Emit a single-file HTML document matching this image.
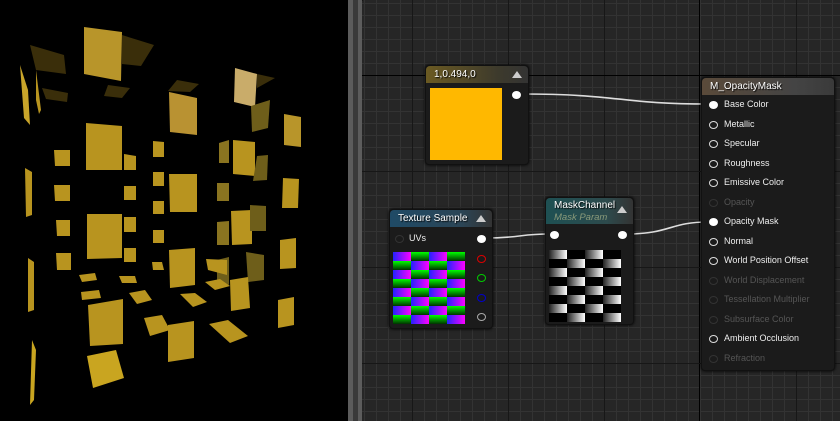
<!DOCTYPE html>
<html><head><style>
*{margin:0;padding:0;box-sizing:border-box}
body{width:840px;height:421px;overflow:hidden;background:#000;position:relative;font-family:"Liberation Sans",sans-serif;}
#graph{position:absolute;left:362px;top:0;width:478px;height:421px;background-color:#262626;
background-image:linear-gradient(#161616,#161616),linear-gradient(#161616,#161616),linear-gradient(to right,#333 1px,transparent 1px),linear-gradient(to bottom,#333 1px,transparent 1px);
}
.vl{position:absolute;top:0;width:1px;height:421px;background:#171717}
.hl{position:absolute;left:362px;width:478px;height:1px;background:#171717}
.node{position:absolute;background:#1b1b1b;border-radius:4px;box-shadow:0 0 3px #000;border:1px solid #111}
.hdr{height:17px;border-radius:4px 4px 0 0;color:#fff;font-size:10px;line-height:17px;padding-left:8px;text-shadow:1px 1px 1px #000}
.tri{position:absolute;right:6px;top:5px;width:0;height:0;border-left:5px solid transparent;border-right:5px solid transparent;border-bottom:7px solid #ccc}
.pin{position:absolute;width:9px;height:8px;border-radius:50%;}
.pf{background:#fff}
.po{border:1.5px solid #ddd}
.lbl{position:absolute;font-size:9px;color:#eee}
.dim{color:#555}
</style></head><body>
<svg width="348" height="421" style="position:absolute;left:0;top:0">
<rect width="348" height="421" fill="#000"/>
<g fill="#b8941f">
<polygon points="84,27 122,32 121,81 84,74" fill="#b8952a"/>
<polygon points="122,35 154,45 141,66 122,64" fill="#3a2e0a"/>
<polygon points="30,45 64,55 66,74 36,70" fill="#3a2e0a"/>
<polygon points="42,88 68,93 67,102 46,99" fill="#3a2e0a"/>
<polygon points="108,85 130,88 122,98 104,96" fill="#3a2e0a"/>
<polygon points="20,65 28,90 30,125 24,118" fill="#c9a52a"/>
<polygon points="36,70 41,110 39,114 36,100"/>
<polygon points="235,68 257,74 255,107 234,102" fill="#c9ac6a"/>
<polygon points="257,74 275,78 257,88" fill="#3a2e0a"/>
<polygon points="169,92 197,98 197,135 170,132" fill="#b99232"/>
<polygon points="177,80 199,84 190,92 168,91" fill="#3a2e0a"/>
<polygon points="251,106 270,100 268,128 252,132" fill="#6e5e1a"/>
<polygon points="284,114 301,117 301,147 284,145" fill="#b8952a"/>
<polygon points="86,123 122,126 122,170 86,170"/>
<polygon points="54,150 70,150 70,166 55,166"/>
<polygon points="124,154 136,156 136,170 124,170"/>
<polygon points="153,141 164,142 164,157 153,157"/>
<polygon points="219,143 229,140 229,163 219,163" fill="#8a7420"/>
<polygon points="233,140 255,142 255,176 233,174"/>
<polygon points="257,156 268,155 267,180 253,181" fill="#6e5e1a"/>
<polygon points="54,185 70,185 70,201 55,201"/>
<polygon points="124,186 136,186 136,200 124,200"/>
<polygon points="153,172 164,172 164,186 153,186"/>
<polygon points="169,174 197,174 197,212 170,212"/>
<polygon points="217,183 229,183 229,201 217,201" fill="#8a7420"/>
<polygon points="283,178 299,179 298,208 282,208"/>
<polygon points="25,168 32,172 32,215 26,217"/>
<polygon points="87,214 122,214 122,258 87,259"/>
<polygon points="56,220 70,220 70,236 57,236"/>
<polygon points="124,217 136,217 136,232 124,232"/>
<polygon points="153,201 164,201 164,214 153,214"/>
<polygon points="231,211 252,210 252,244 232,245"/>
<polygon points="250,205 266,206 266,231 250,231" fill="#6e5e1a"/>
<polygon points="280,240 296,238 296,268 280,269"/>
<polygon points="217,222 229,221 229,245 217,245" fill="#8a7420"/>
<polygon points="56,253 71,253 71,270 57,270"/>
<polygon points="124,248 136,248 136,262 124,262"/>
<polygon points="153,230 164,230 164,243 153,243"/>
<polygon points="169,250 195,248 195,285 170,288"/>
<polygon points="217,260 229,257 229,285 217,280" fill="#6e5e1a"/>
<polygon points="246,252 264,255 264,280 248,282" fill="#6e5e1a"/>
<polygon points="28,258 34,262 34,310 28,312"/>
<polygon points="79,275 95,273 97,280 82,282"/>
<polygon points="119,276 135,276 137,283 122,283"/>
<polygon points="81,292 99,290 101,298 82,300"/>
<polygon points="129,293 145,290 152,300 137,304"/>
<polygon points="180,294 195,293 207,302 193,307"/>
<polygon points="205,282 220,279 230,286 215,290"/>
<polygon points="230,280 248,277 250,308 231,311"/>
<polygon points="88,305 123,299 123,344 90,346"/>
<polygon points="144,318 162,315 170,330 150,336"/>
<polygon points="209,324 228,320 248,336 230,343"/>
<polygon points="168,325 194,321 194,358 168,362"/>
<polygon points="278,300 294,297 294,325 278,328"/>
<polygon points="87,356 116,350 124,378 93,388" fill="#c9a520"/>
<polygon points="32,340 36,350 34,400 30,405" fill="#c9a520"/>
<polygon points="152,262 162,262 164,270 153,270"/>
<polygon points="206,259 227,260 227,275 208,270"/>
</g>
</svg>
<div style="position:absolute;left:348px;top:0;width:5px;height:421px;background:#5c5c5c"></div>
<div style="position:absolute;left:353px;top:0;width:5px;height:421px;background:#3a3a3a"></div>
<div style="position:absolute;left:358px;top:0;width:4px;height:421px;background:#5c5c5c"></div>
<div id="graph" style="background-size:1px 1px,1px 1px,12px 12px,12px 12px;background-position:0 0,0 0,2px 3px,2px 3px;background-repeat:no-repeat,no-repeat,repeat,repeat"></div>
<div class="vl" style="left:412px"></div><div class="vl" style="left:508px"></div><div class="vl" style="left:604px"></div><div class="vl" style="left:699px;background:#000"></div><div class="vl" style="left:796px"></div>
<div class="hl" style="top:75px;background:#000"></div><div class="hl" style="top:171px"></div><div class="hl" style="top:267px"></div><div class="hl" style="top:363px"></div>
<svg width="840" height="421" style="position:absolute;left:0;top:0">
<g fill="none" stroke="#ddd" stroke-width="1.6">
<path d="M521,94 C620,94 620,104 708,104"/>
<path d="M485,238 C520,238 520,234 549,234"/>
<path d="M626,234 C670,234 670,222 708,222"/>
</g></svg>

<div class="node" style="left:425px;top:65px;width:104px;height:100px">
<div class="hdr" style="background:linear-gradient(to right,#6b5a22,#3d3a2c 70%,#333)">1,0.494,0</div><div class="tri"></div>
<div style="position:absolute;left:4px;top:22px;width:72px;height:72px;background:#ffb800"></div>
<div class="pin pf" style="left:86px;top:25px"></div>
</div>

<div class="node" style="left:389px;top:209px;width:104px;height:120px">
<div class="hdr" style="background:linear-gradient(to right,#1f4a66,#2b4556 70%,#333)">Texture Sample</div><div class="tri"></div>
<div class="pin" style="left:5px;top:25px;border:1.5px solid #333"></div><div class="lbl" style="left:19px;top:23px">UVs</div>
<div class="pin pf" style="left:87px;top:25px"></div>
<div style="position:absolute;left:3px;top:42px;width:72px;height:72px;background:
repeating-linear-gradient(to bottom,transparent 0 9px,transparent 9px 18px),
linear-gradient(to right,#00f,#f0f)">
<svg width="72" height="72" style="position:absolute;left:0;top:0"><defs>
<linearGradient id="g" x1="0" y1="0" x2="0" y2="1"><stop offset="0" stop-color="#0f0"/><stop offset="1" stop-color="#030"/></linearGradient>
<linearGradient id="b" x1="0" y1="0" x2="1" y2="0"><stop offset="0" stop-color="#22f"/><stop offset="1" stop-color="#f0f"/></linearGradient></defs>
<g id="r1"><rect x="0" y="0" width="18" height="9" fill="url(#b)"/><rect x="18" y="0" width="18" height="9" fill="url(#g)"/><rect x="36" y="0" width="18" height="9" fill="url(#b)"/><rect x="54" y="0" width="18" height="9" fill="url(#g)"/></g>
<g id="r2"><rect x="0" y="9" width="18" height="9" fill="url(#g)"/><rect x="18" y="9" width="18" height="9" fill="url(#b)"/><rect x="36" y="9" width="18" height="9" fill="url(#g)"/><rect x="54" y="9" width="18" height="9" fill="url(#b)"/></g>
<use href="#r1" y="18"/><use href="#r2" y="18"/><use href="#r1" y="36"/><use href="#r2" y="36"/><use href="#r1" y="54"/><use href="#r2" y="54"/>
</svg></div>
<div class="pin" style="left:87px;top:45px;border:1.5px solid #d00"></div>
<div class="pin" style="left:87px;top:64px;border:1.5px solid #0c0"></div>
<div class="pin" style="left:87px;top:84px;border:1.5px solid #00c"></div>
<div class="pin" style="left:87px;top:103px;border:1.5px solid #aaa"></div>
</div>

<div class="node" style="left:545px;top:197px;width:89px;height:128px">
<div class="hdr" style="height:26px;line-height:12px;padding-top:2px;background:linear-gradient(to right,#1e5053,#2d4a4c 70%,#333)">MaskChannel<br><i style="color:#8a9a7a;text-shadow:none;font-size:9.5px">Mask Param</i></div><div class="tri" style="top:8px"></div>
<div class="pin pf" style="left:4px;top:33px"></div>
<div class="pin pf" style="left:72px;top:33px"></div>
<div style="position:absolute;left:3px;top:52px;width:72px;height:72px">
<svg width="72" height="72"><defs><linearGradient id="w" x1="0" x2="1"><stop offset="0" stop-color="#222"/><stop offset="1" stop-color="#fff"/></linearGradient></defs>
<rect width="72" height="72" fill="#000"/>
<g fill="url(#w)"><rect x="0" y="0" width="18" height="9"/><rect x="36" y="0" width="18" height="9"/><rect x="18" y="9" width="18" height="9"/><rect x="54" y="9" width="18" height="9"/>
<rect x="0" y="18" width="18" height="9"/><rect x="36" y="18" width="18" height="9"/><rect x="18" y="27" width="18" height="9"/><rect x="54" y="27" width="18" height="9"/>
<rect x="0" y="36" width="18" height="9"/><rect x="36" y="36" width="18" height="9"/><rect x="18" y="45" width="18" height="9"/><rect x="54" y="45" width="18" height="9"/>
<rect x="0" y="54" width="18" height="9"/><rect x="36" y="54" width="18" height="9"/><rect x="18" y="63" width="18" height="9"/><rect x="54" y="63" width="18" height="9"/></g></svg></div>
</div>

<div class="node" style="left:701px;top:77px;width:134px;height:294px">
<div class="hdr" style="background:linear-gradient(to right,#5a4a3a,#444 70%,#3a3a3a)">M_OpacityMask</div>
<div style="position:absolute;left:0;top:19px;width:134px">
<div class="pin pf" style="left:7px;top:4px"></div><div class="lbl" style="left:22px;top:2px">Base Color</div>
<div class="pin po" style="left:7px;top:24px"></div><div class="lbl" style="left:22px;top:22px">Metallic</div>
<div class="pin po" style="left:7px;top:43px"></div><div class="lbl" style="left:22px;top:41px">Specular</div>
<div class="pin po" style="left:7px;top:63px"></div><div class="lbl" style="left:22px;top:61px">Roughness</div>
<div class="pin po" style="left:7px;top:82px"></div><div class="lbl" style="left:22px;top:80px">Emissive Color</div>
<div class="pin" style="left:7px;top:102px;border:1.5px solid #333"></div><div class="lbl dim" style="left:22px;top:100px">Opacity</div>
<div class="pin pf" style="left:7px;top:121px"></div><div class="lbl" style="left:22px;top:119px">Opacity Mask</div>
<div class="pin po" style="left:7px;top:141px"></div><div class="lbl" style="left:22px;top:139px">Normal</div>
<div class="pin po" style="left:7px;top:160px"></div><div class="lbl" style="left:22px;top:158px">World Position Offset</div>
<div class="pin" style="left:7px;top:180px;border:1.5px solid #333"></div><div class="lbl dim" style="left:22px;top:178px">World Displacement</div>
<div class="pin" style="left:7px;top:199px;border:1.5px solid #333"></div><div class="lbl dim" style="left:22px;top:197px">Tessellation Multiplier</div>
<div class="pin" style="left:7px;top:219px;border:1.5px solid #333"></div><div class="lbl dim" style="left:22px;top:217px">Subsurface Color</div>
<div class="pin po" style="left:7px;top:238px"></div><div class="lbl" style="left:22px;top:236px">Ambient Occlusion</div>
<div class="pin" style="left:7px;top:258px;border:1.5px solid #333"></div><div class="lbl dim" style="left:22px;top:256px">Refraction</div>
</div></div>
</body></html>
